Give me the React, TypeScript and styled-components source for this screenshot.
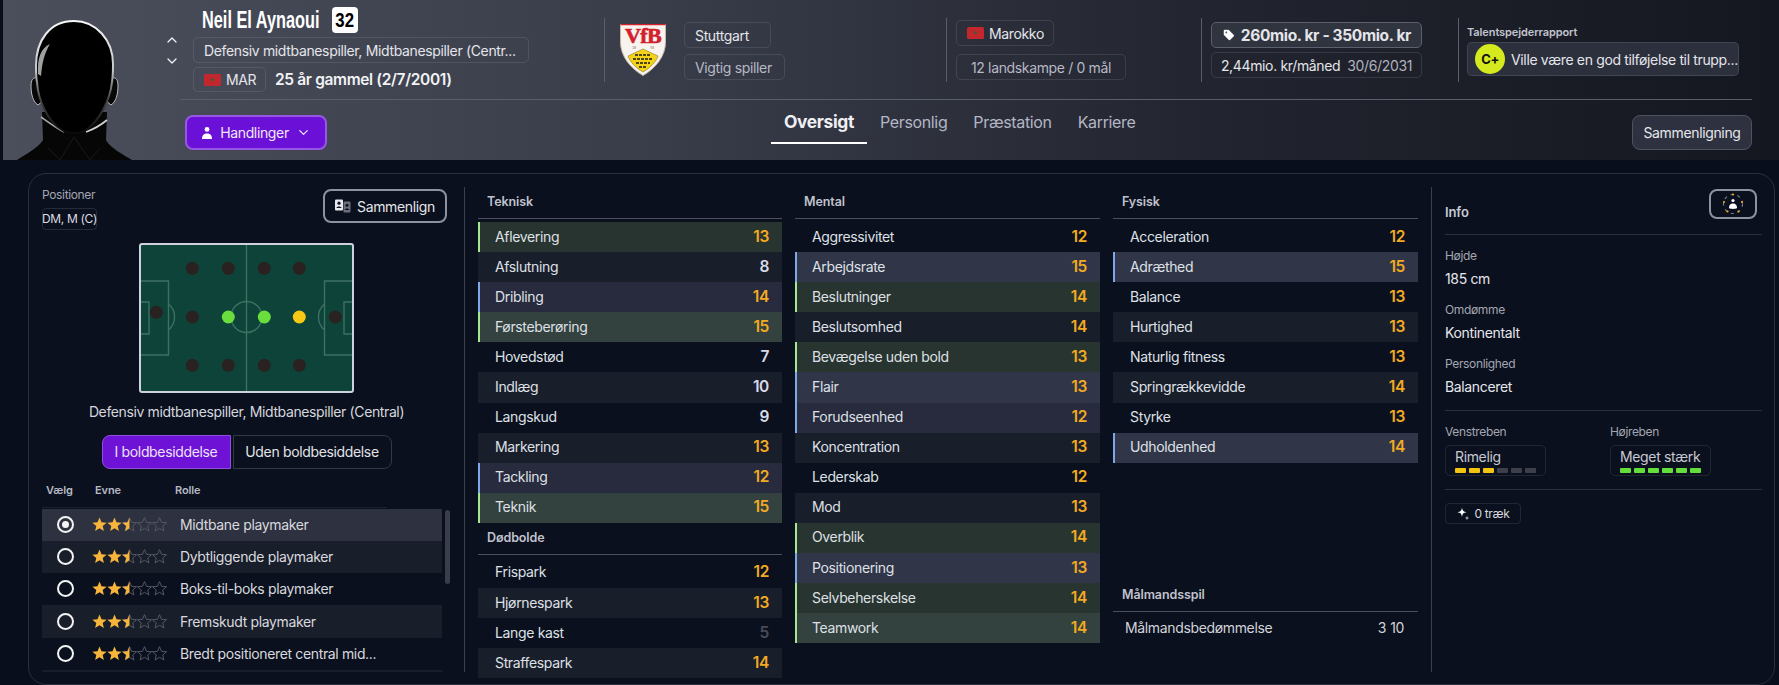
import React from "react";
import styled, { createGlobalStyle } from "styled-components";
import { ChevronUp, ChevronDown, Tag } from "lucide-react";

const Global = createGlobalStyle`
  html, body { margin: 0; padding: 0; background: #080e1b; }
  body { font-family: Inter, "Noto Sans", "Liberation Sans", sans-serif; font-size: 14px; letter-spacing: -0.35px; color: #e2e3e8; }
  * { box-sizing: border-box; }
`;

const Page = styled.div`
  width: 1779px;
  height: 685px;
  overflow: hidden;
  background: #080e1b;
`;

const Header = styled.header`
  margin-left: 3px;
  height: 160px;
  display: flex;
  background: linear-gradient(90deg, #4b4f5c 0%, #3a3e4b 35%, #22252f 68%, #14171f 100%);
`;

const Portrait = styled.div`
  width: 157px;
  height: 160px;
  flex: none;
  svg { display: block; }
`;

const Arrows = styled.div`
  width: 20px;
  flex: none;
  padding-top: 32px;
  display: flex;
  flex-direction: column;
  align-items: center;
  gap: 5px;
  color: #eceef2;
  margin-left: 2px;
  margin-right: -2px;
`;

const HeaderMain = styled.div`
  width: 1572px;
  flex: none;
`;

const TopRow = styled.div`
  height: 100px;
  border-bottom: 1px solid #5a5e6b;
  display: grid;
  grid-template-columns: 424px 342px 255px 257px 1fr;
`;

const Identity = styled.div`
  padding: 7px 0 0 13px;
  display: flex;
  flex-direction: column;
  gap: 4px;
`;

const NameRow = styled.div`
  height: 26px;
  padding-left: 9px;
  display: flex;
  align-items: center;
  gap: 10px;
`;

const Name = styled.span`
  font-family: "Liberation Sans", sans-serif;
  font-weight: 700;
  font-size: 24px;
  letter-spacing: 0;
  color: #fff;
  display: inline-block;
  width: 120px;
  white-space: nowrap;
  transform: scaleX(0.68);
  transform-origin: left center;
`;

const Shirt = styled.span`
  width: 26px;
  height: 26px;
  border-radius: 4px;
  background: #fff;
  display: flex;
  align-items: center;
  justify-content: center;
`;

const ShirtNumber = styled.span`
  color: #000;
  font-family: "Liberation Sans", sans-serif;
  font-weight: 700;
  font-size: 21px;
  letter-spacing: 0;
  transform: scaleX(0.8);
`;

const Chip = styled.span<{ $w?: number; $h?: number; $muted?: boolean; $strong?: boolean; $center?: boolean }>`
  display: inline-flex;
  align-items: center;
  justify-content: ${(p) => (p.$center ? "center" : "flex-start")};
  gap: 5px;
  width: ${(p) => (p.$w ? `${p.$w}px` : "auto")};
  height: ${(p) => p.$h ?? 26}px;
  padding: 0 10px;
  border: 1px solid ${(p) => (p.$strong ? "#5c606c" : "rgba(160,165,185,0.18)")};
  background: ${(p) => (p.$strong ? "#30343f" : "transparent")};
  border-radius: 5px;
  color: ${(p) => (p.$muted ? "#b7b9c5" : "#e4e5ea")};
  font-size: ${(p) => (p.$strong ? "15.5px" : "14px")};
  font-weight: ${(p) => (p.$strong ? 700 : 400)};
  white-space: nowrap;
  flex: none;
`;

const AgeRow = styled.div`
  display: flex;
  align-items: center;
  gap: 9px;
`;

const Age = styled.span`
  font-size: 15.5px;
  font-weight: 600;
  color: #f2f2f5;
`;

const FlagBox = styled.svg`
  flex: none;
  display: block;
`;

const Group = styled.div<{ $gap?: number; $row?: boolean; $top?: number }>`
  margin-top: 18px;
  height: 64px;
  border-left: 1px solid #5a5e6b;
  padding: ${(p) => p.$top ?? 4}px 0 0 9px;
  display: flex;
  flex-direction: ${(p) => (p.$row ? "row" : "column")};
  align-items: flex-start;
  gap: ${(p) => p.$gap ?? 6}px;
`;

const ClubStack = styled.div`
  display: flex;
  flex-direction: column;
  align-items: flex-start;
  gap: 6px;
`;

const Crest = styled.svg`
  display: block;
  flex: none;
  margin: 2px 12px 0 6px;
`;

const Faint = styled.span`
  color: #b0b2be;
  margin-left: 2px;
`;

const ReportLabel = styled.div`
  font-size: 11px;
  font-weight: 600;
  line-height: 14px;
  letter-spacing: -0.1px;
  color: #c2c4cf;
  margin-left: -1px;
`;

const ReportChip = styled.div`
  width: 272px;
  height: 34px;
  margin-left: -1px;
  border-radius: 5px;
  border: 1px solid rgba(160, 165, 185, 0.18);
  background: #2c303d;
  display: flex;
  align-items: center;
  padding-left: 7px;
  gap: 6px;
  white-space: nowrap;
  color: #e4e5ea;
`;

const Grade = styled.span`
  width: 30px;
  height: 30px;
  border-radius: 50%;
  background: #d4ea1e;
  color: #111;
  font-size: 13px;
  font-weight: 700;
  display: flex;
  align-items: center;
  justify-content: center;
  flex: none;
`;

const BottomRow = styled.div`
  height: 60px;
  display: flex;
  align-items: flex-start;
`;

const ActionButton = styled.button`
  margin: 15px 0 0 5px;
  width: 142px;
  height: 35px;
  border-radius: 8px;
  border: 2px solid #9658e4;
  background: #6b10d6;
  color: #f0e8fb;
  font: inherit;
  font-size: 14px;
  letter-spacing: inherit;
  display: flex;
  align-items: center;
  justify-content: center;
  gap: 7px;
`;

const Tabs = styled.nav`
  margin-left: 444px;
  display: flex;
`;

const TabItem = styled.div<{ $active?: boolean }>`
  height: 44px;
  padding: 1px 13px 0;
  display: flex;
  align-items: center;
  font-size: ${(p) => (p.$active ? "17.4px" : "16px")};
  font-weight: ${(p) => (p.$active ? 700 : 400)};
  color: ${(p) => (p.$active ? "#f0f0f4" : "#b4b6c6")};
  border-bottom: 2px solid ${(p) => (p.$active ? "#fff" : "transparent")};
`;

const CompareButton = styled.button`
  margin: 15px 0 0 auto;
  width: 120px;
  height: 35px;
  border-radius: 8px;
  border: 1px solid #50535f;
  background: #2e3240;
  color: #e6e7ec;
  font: inherit;
  font-size: 14px;
  letter-spacing: inherit;
`;

const Panel = styled.main`
  margin: 13px 4px 0 28px;
  height: 512px;
  border: 1px solid #2c303d;
  border-radius: 18px;
  background: #0a101d;
  padding: 13px 13px 11px 0;
  display: flex;
`;

const LeftCol = styled.section`
  width: 436px;
  height: 485px;
  flex: none;
  border-right: 1px solid #3c404c;
  padding: 0 13px;
  display: flex;
  flex-direction: column;
  overflow: hidden;
`;

const LeftTop = styled.div`
  height: 56px;
  display: flex;
  justify-content: space-between;
  align-items: flex-start;
`;

const PosBlock = styled.div`
  display: flex;
  flex-direction: column;
  align-items: flex-start;
`;

const SmallLabel = styled.div`
  font-size: 12px;
  line-height: 16px;
  color: #a4a6b2;
`;

const PosChip = styled.span`
  margin-top: 5px;
  height: 22px;
  width: 55px;
  padding-bottom: 2px;
  border: 1px solid rgba(160, 165, 185, 0.18);
  border-radius: 4px;
  font-size: 12px;
  display: flex;
  align-items: center;
  justify-content: center;
  color: #dcdde2;
  white-space: nowrap;
`;

const OutlineButton = styled.button`
  margin: 2px 4px 0 0;
  width: 124px;
  height: 34px;
  border: 2px solid #8f91a0;
  border-radius: 8px;
  background: transparent;
  color: #e4e5ea;
  font: inherit;
  font-size: 14px;
  letter-spacing: inherit;
  display: flex;
  align-items: center;
  justify-content: center;
  gap: 6px;
`;

const PitchWrap = styled.div`
  display: flex;
  justify-content: center;
  svg { display: block; }
`;

const Caption = styled.div`
  margin-top: 10px;
  line-height: 18px;
  text-align: center;
  color: #d6d7dd;
  white-space: nowrap;
  letter-spacing: -0.38px;
`;

const Toggle = styled.div`
  margin-top: 14px;
  display: flex;
  justify-content: center;
  gap: 2px;
`;

const ToggleButton = styled.button<{ $on?: boolean }>`
  height: 34px;
  width: ${(p) => (p.$on ? 129 : 159)}px;
  border: 1px solid ${(p) => (p.$on ? "#8f4fe0" : "#343845")};
  background: ${(p) => (p.$on ? "#6e12d6" : "transparent")};
  color: ${(p) => (p.$on ? "#ece2fa" : "#e2e3e8")};
  border-radius: ${(p) => (p.$on ? "8px 0 0 8px" : "0 8px 8px 0")};
  font: inherit;
  font-size: 14px;
  letter-spacing: inherit;
`;

const RoleHead = styled.div`
  width: 345px;
  height: 39px;
  margin-bottom: 1px;
  padding: 13px 0 0 4px;
  border-bottom: 1px solid #1c212d;
  display: grid;
  grid-template-columns: 49px 80px 1fr;
  font-size: 11px;
  font-weight: 600;
  line-height: 16px;
  letter-spacing: -0.1px;
  color: #b6b8c4;
`;

const RoleList = styled.div`
  position: relative;
  height: 164px;
  overflow: hidden;
`;

const RoleRow = styled.div<{ $bg: string }>`
  width: 400px;
  height: 32.25px;
  padding-bottom: 1px;
  background: ${(p) => p.$bg};
  display: grid;
  grid-template-columns: 50px 88px 1fr;
  align-items: center;
  color: #d8d9de;
  white-space: nowrap;
`;

const Radio = styled.span<{ $on?: boolean }>`
  margin-left: 15px;
  width: 17px;
  height: 17px;
  border-radius: 50%;
  border: 2px solid #f4f4f6;
  display: flex;
  align-items: center;
  justify-content: center;
  &::after {
    content: "";
    display: ${(p) => (p.$on ? "block" : "none")};
    width: 7px;
    height: 7px;
    border-radius: 50%;
    background: #f4f4f6;
  }
`;

const StarRow = styled.span`
  display: flex;
  svg { display: block; }
`;

const ScrollThumb = styled.div`
  position: absolute;
  left: 403px;
  top: 1px;
  width: 5px;
  height: 74px;
  border-radius: 3px;
  background: #3a3e4a;
`;

const AttrArea = styled.section`
  flex: none;
  padding-left: 13px;
  width: 953px;
  height: 485px;
  display: grid;
  grid-template-columns: 304px 305px 305px;
  column-gap: 13px;
  align-items: start;
`;

const AttrCol = styled.div``;

const AttrTitle = styled.div`
  height: 32px;
  border-bottom: 1px solid #4b4e5c;
  margin-bottom: 3px;
  padding: 6px 0 0 9px;
  font-size: 12.5px;
  line-height: 18px;
  font-weight: 600;
  letter-spacing: -0.1px;
  color: #c0c2ce;
`;

const AttrRow = styled.div<{ $bg: string; $bar: string }>`
  height: 30.1px;
  padding: 0 13px 2px 15px;
  background: ${(p) => p.$bg};
  border-left: 2px solid ${(p) => p.$bar};
  display: flex;
  align-items: center;
  justify-content: space-between;
  color: #dfe0e6;
`;

const AttrValue = styled.span<{ $c: string }>`
  font-size: 15.5px;
  font-weight: 600;
  color: ${(p) => p.$c};
`;

const Keeper = styled.div`
  margin-top: 117px;
`;

const KeeperRow = styled.div`
  height: 25px;
  padding: 0 14px 0 12px;
  display: flex;
  align-items: center;
  justify-content: space-between;
  color: #d2d3da;
`;

const KeeperVals = styled.span`
  display: flex;
  gap: 4px;
`;

const InfoCol = styled.aside`
  flex: none;
  width: 331px;
  height: 485px;
  margin-left: 13px;
  border-left: 1px solid #3c404c;
  padding-left: 13px;
`;

const InfoHead = styled.div`
  height: 48px;
  border-bottom: 1px solid #2c303c;
  display: flex;
  justify-content: space-between;
  align-items: flex-start;
  padding-right: 5px;
`;

const InfoTitle = styled.div`
  margin-top: 16px;
  line-height: 18px;
  font-size: 13px;
  font-weight: 600;
  letter-spacing: -0.1px;
  color: #c8cad4;
`;

const IconButton = styled.button`
  margin-top: 2px;
  width: 48px;
  height: 30px;
  border: 2px solid #8f91a0;
  border-radius: 8px;
  background: transparent;
  display: flex;
  align-items: center;
  justify-content: center;
  padding: 0;
`;

const Fields = styled.div`
  padding: 13px 0;
  border-bottom: 1px solid #2c303c;
  display: flex;
  flex-direction: column;
  gap: 13px;
`;

const Field = styled.div`
  display: flex;
  flex-direction: column;
  gap: 5px;
`;

const FieldValue = styled.div`
  line-height: 20px;
  color: #e6e7ec;
`;

const Feet = styled.div`
  padding: 13px 0;
  border-bottom: 1px solid #2c303c;
  display: grid;
  grid-template-columns: 165px 1fr;
`;

const FootChip = styled.div`
  width: 101px;
  height: 31px;
  border: 1px solid rgba(160, 165, 185, 0.15);
  border-radius: 5px;
  padding: 2px 0 0 9px;
  line-height: 18px;
  color: #c8c9d2;
`;

const Bars = styled.div`
  display: flex;
  gap: 3px;
  margin-top: 2px;
`;

const Bar = styled.span<{ $c: string }>`
  width: 11px;
  height: 5px;
  border-radius: 1px;
  background: ${(p) => p.$c};
`;

const TraitChip = styled.span`
  margin-top: 13px;
  width: 76px;
  height: 21px;
  border: 1px solid rgba(160, 165, 185, 0.15);
  border-radius: 4px;
  font-size: 12px;
  display: flex;
  align-items: center;
  justify-content: center;
  gap: 6px;
  color: #d8d9de;
`;

type Tone = "n" | "g" | "b";
type Attr = [string, number, Tone];

const teknisk: Attr[] = [
  ["Aflevering", 13, "g"], ["Afslutning", 8, "n"], ["Dribling", 14, "b"], ["Førsteberøring", 15, "g"],
  ["Hovedstød", 7, "n"], ["Indlæg", 10, "n"], ["Langskud", 9, "n"], ["Markering", 13, "n"],
  ["Tackling", 12, "b"], ["Teknik", 15, "g"],
];
const doedbolde: Attr[] = [
  ["Frispark", 12, "n"], ["Hjørnespark", 13, "n"], ["Lange kast", 5, "n"], ["Straffespark", 14, "n"],
];
const mental: Attr[] = [
  ["Aggressivitet", 12, "n"], ["Arbejdsrate", 15, "b"], ["Beslutninger", 14, "g"], ["Beslutsomhed", 14, "n"],
  ["Bevægelse uden bold", 13, "g"], ["Flair", 13, "b"], ["Forudseenhed", 12, "b"], ["Koncentration", 13, "n"],
  ["Lederskab", 12, "n"], ["Mod", 13, "n"], ["Overblik", 14, "g"], ["Positionering", 13, "b"],
  ["Selvbeherskelse", 14, "g"], ["Teamwork", 14, "g"],
];
const fysisk: Attr[] = [
  ["Acceleration", 12, "n"], ["Adræthed", 15, "b"], ["Balance", 13, "n"], ["Hurtighed", 13, "n"],
  ["Naturlig fitness", 13, "n"], ["Springrækkevidde", 14, "n"], ["Styrke", 13, "n"], ["Udholdenhed", 14, "b"],
];

const rowBg = (tone: Tone, i: number) => {
  const odd = i % 2 === 1;
  if (tone === "g") return odd ? "#33423f" : "#28342f";
  if (tone === "b") return odd ? "#303648" : "#272b3d";
  return odd ? "#191e2b" : "transparent";
};
const barColor = (tone: Tone) => (tone === "g" ? "#a6e88f" : tone === "b" ? "#7fa8e8" : "transparent");
const valueColor = (v: number) => (v < 6 ? "#4a4d58" : v <= 10 ? "#d8dae8" : "#f2aa22");

const AttrList = ({ items }: { items: Attr[] }) => (
  <>
    {items.map(([label, value, tone], i) => (
      <AttrRow key={label} $bg={rowBg(tone, i)} $bar={barColor(tone)}>
        <span>{label}</span>
        <AttrValue $c={valueColor(value)}>{value}</AttrValue>
      </AttrRow>
    ))}
  </>
);

const STAR = "M7.5 0.6 L9.5 5.3 L14.6 5.7 L10.7 9 L11.9 14 L7.5 11.3 L3.1 14 L4.3 9 L0.4 5.7 L5.5 5.3 Z";

const Stars = ({ id }: { id: string }) => (
  <StarRow>
    {[0, 1, 2, 3, 4].map((i) => (
      <svg key={i} width="15" height="15" viewBox="0 0 15 15">
        {i < 2 && <path d={STAR} fill="#f8b53c" />}
        {i === 2 && (
          <>
            <defs>
              <clipPath id={`${id}-half`}>
                <rect x="0" y="0" width="7.5" height="15" />
              </clipPath>
            </defs>
            <path d={STAR} fill="none" stroke="#555864" strokeWidth="1" />
            <path d={STAR} fill="#f8b53c" clipPath={`url(#${id}-half)`} />
          </>
        )}
        {i > 2 && <path d={STAR} fill="none" stroke="#555864" strokeWidth="1" />}
      </svg>
    ))}
  </StarRow>
);

const Flag = () => (
  <FlagBox width="17" height="12" viewBox="0 0 17 12">
    <rect width="17" height="12" rx="1.5" fill="#c1272d" />
    <path d="M8.5 4 L9.2 6.9 L7 5.2 L10 5.2 L7.8 6.9 Z" fill="none" stroke="#1d6b3a" strokeWidth="0.6" />
  </FlagBox>
);

const Silhouette = () => (
  <svg width="157" height="160" viewBox="3 0 157 160">
    <defs>
      <linearGradient id="rim" x1="0" y1="0" x2="0" y2="1">
        <stop offset="0" stopColor="#f8f8f8" />
        <stop offset="0.45" stopColor="#c4c4c4" />
        <stop offset="0.68" stopColor="#4a4a4a" />
        <stop offset="1" stopColor="#0a0a0a" />
      </linearGradient>
    </defs>
    <path d="M37 78 C33 77 31 80 31 86 C31 94 33 102 38 105 L44 100 Z" fill="#080808" stroke="#bcbcbc" strokeWidth="1" />
    <path d="M112 78 C116 77 118 80 118 86 C118 94 116 102 111 105 L105 100 Z" fill="#080808" stroke="#bcbcbc" strokeWidth="1" />
    <path d="M42 112 L43 140 C38 148 26 154 17 160 L132 160 C124 155 110 148 106 140 L107 112 Z" fill="#060606" />
    <path d="M41 117 C48 122 56 128 64 132" fill="none" stroke="#a8a8a8" strokeWidth="1.6" />
    <path d="M107 120 C101 125 94 129 86 132" fill="none" stroke="#d0d0d0" strokeWidth="1.8" />
    <path d="M74 21 C50 21 36 40 36 66 C36 72 36 78 37 82 C38 100 48 122 62 130 C68 134 80 134 86 130 C100 120 110 100 112 82 C113 76 113 70 113 64 C113 40 96 21 74 21 Z"
      fill="#000" stroke="url(#rim)" strokeWidth="2" />
    <path d="M38 74 C37 58 41 48 50 44 C45 52 42 62 41 76 Z" fill="#a0a0a0" />
    <path d="M74 137 L60 160 M74 137 L90 160 M48 148 L60 160 M100 148 L90 160" stroke="#1a1a1a" strokeWidth="1" fill="none" />
  </svg>
);

const ClubCrest = () => (
  <Crest width="46" height="52" viewBox="0 0 46 52">
    <path d="M0.5 0.5 H45.5 V18 C45.5 32 36 44 23 51.5 C10 44 0.5 32 0.5 18 Z" fill="#f7f3ee" stroke="#c9b7a6" />
    <path d="M0.5 0.5 H45.5" stroke="#d3202c" strokeWidth="1.4" />
    <text x="23" y="19" textAnchor="middle" fontFamily="'Liberation Serif', serif" fontWeight="700" fontSize="22" letterSpacing="-0.6" stroke="#d3202c" strokeWidth="0.6" fill="#d3202c">VfB</text>
    <text x="14" y="25" textAnchor="middle" fontFamily="'Liberation Sans', sans-serif" fontSize="3.6" fill="#8a6a5a">18</text>
    <text x="32" y="25" textAnchor="middle" fontFamily="'Liberation Sans', sans-serif" fontSize="3.6" fill="#8a6a5a">93</text>
    <path d="M8 32 L23 25 L38 32 C36 38 30 44 23 48 C16 44 10 38 8 32 Z" fill="#f4d21a" stroke="#8d7a2a" strokeWidth="0.6" />
    <path d="M15 31 H31 M13 35 H33 M16 39 H30 M19 43 H27" stroke="#1a1a1a" strokeWidth="1.3" strokeDasharray="3 1" />
  </Crest>
);

const PersonIcon = () => (
  <svg width="12" height="14" viewBox="0 0 12 14">
    <circle cx="6" cy="3.4" r="2.4" fill="#fff" />
    <path d="M1 13 C1 9 3 7.4 6 7.4 C9 7.4 11 9 11 13 Z" fill="#fff" />
  </svg>
);

const CompareIcon = () => (
  <svg width="16" height="14" viewBox="0 0 16 14">
    <rect x="0" y="0.5" width="8" height="11" rx="1" fill="#e8e8ee" />
    <circle cx="4" cy="4.2" r="1.6" fill="#0a101d" />
    <path d="M1.5 9 C1.5 7 6.5 7 6.5 9 Z" fill="#0a101d" />
    <rect x="8.5" y="2.5" width="7" height="11" rx="1" fill="#6b6e7b" />
    <circle cx="12" cy="6.2" r="1.5" fill="#0a101d" />
    <path d="M9.8 11 C9.8 9 14.2 9 14.2 11 Z" fill="#0a101d" />
  </svg>
);

const OrbitIcon = () => (
  <svg width="24" height="24" viewBox="0 0 24 24">
    <circle cx="12" cy="12" r="9.5" fill="none" stroke="#7d7f8c" strokeWidth="1.1" strokeDasharray="3 4" />
    <circle cx="12" cy="2.5" r="1.1" fill="#f2aa22" />
    <circle cx="3" cy="10" r="1.1" fill="#f2aa22" />
    <circle cx="21" cy="10" r="1.1" fill="#f2aa22" />
    <circle cx="6.5" cy="19.5" r="1.1" fill="#f2aa22" />
    <circle cx="17.5" cy="19.5" r="1.1" fill="#f2aa22" />
    <circle cx="12" cy="8.5" r="1.6" fill="#fff" />
    <path d="M8 16 C8 12.5 10 11.4 12 11.4 C14 11.4 16 12.5 16 16 C14.5 17.2 9.5 17.2 8 16 Z" fill="#fff" />
  </svg>
);

const SparkIcon = () => (
  <svg width="12" height="13" viewBox="0 0 12 13">
    <path d="M5 0.5 C5.4 3.6 6.4 4.8 9.6 5.2 C6.4 5.6 5.4 6.8 5 10 C4.6 6.8 3.6 5.6 0.4 5.2 C3.6 4.8 4.6 3.6 5 0.5 Z" fill="#fff" />
    <path d="M10 9.5 V12.5 M8.5 11 H11.5" stroke="#cfd0d6" strokeWidth="0.9" />
  </svg>
);

const dots: [number, number, string][] = [
  [192.3, 268.3, "#2a2220"], [228.3, 268.3, "#2a2220"], [264.3, 268.3, "#2a2220"], [299.3, 268.3, "#2a2220"],
  [156.3, 312.3, "#2a2220"], [192.3, 317, "#2a2220"], [228.3, 317, "#6ade3c"], [264.3, 317, "#6ade3c"],
  [299.3, 317, "#f7c914"], [335.3, 317, "#2a2220"],
  [192.3, 365.3, "#2a2220"], [228.3, 365.3, "#2a2220"], [264.3, 365.3, "#2a2220"], [299.3, 365.3, "#2a2220"],
];

const Pitch = () => (
  <svg width="215" height="150" viewBox="139 243 215 150">
    <rect x="140" y="244" width="213" height="148" rx="2" fill="#0d4338" />
    <g fill="none" stroke="#3f7064" strokeWidth="1.4">
      <path d="M246.5 244 V392" />
      <circle cx="246.5" cy="317" r="15.5" />
      <path d="M140 281 H168.5 V355 H140" />
      <path d="M140 302 H149 V334 H140" />
      <path d="M168.5 304 A17 17 0 0 1 168.5 330" />
      <path d="M353 281 H324.5 V355 H353" />
      <path d="M353 302 H344 V334 H353" />
      <path d="M324.5 304 A17 17 0 0 0 324.5 330" />
    </g>
    <rect x="140" y="244" width="213" height="148" rx="2" fill="none" stroke="#cdd2dc" strokeWidth="2" />
    {dots.map(([x, y, c]) => (
      <circle key={`${x}-${y}`} cx={x} cy={y} r="6.5" fill={c} />
    ))}
  </svg>
);

const roles = [
  "Midtbane playmaker", "Dybtliggende playmaker", "Boks-til-boks playmaker",
  "Fremskudt playmaker", "Bredt positioneret central mid...", "",
];
const roleBg = ["#2d3140", "#191e2b", "transparent", "#191e2b", "transparent", "#191e2b"];

export default function App() {
  return (
    <Page>
      <Global />
      <Header>
        <Portrait><Silhouette /></Portrait>
        <Arrows>
          <ChevronUp size={16} strokeWidth={2} />
          <ChevronDown size={16} strokeWidth={2} />
        </Arrows>
        <HeaderMain>
          <TopRow>
            <Identity>
              <NameRow>
                <Name>Neil El Aynaoui</Name>
                <Shirt><ShirtNumber>32</ShirtNumber></Shirt>
              </NameRow>
              <Chip $w={336}>Defensiv midtbanespiller, Midtbanespiller (Centr...</Chip>
              <AgeRow>
                <Chip $w={73} $h={25}><Flag />MAR</Chip>
                <Age>25 år gammel (2/7/2001)</Age>
              </AgeRow>
            </Identity>
            <Group $row>
              <ClubCrest />
              <ClubStack>
                <Chip $w={87}>Stuttgart</Chip>
                <Chip $w={101} $muted>Vigtig spiller</Chip>
              </ClubStack>
            </Group>
            <Group $top={2} $gap={8}>
              <Chip $w={98}><Flag />Marokko</Chip>
              <Chip $w={170} $muted $center>12 landskampe / 0 mål</Chip>
            </Group>
            <Group $gap={4}>
              <Chip $w={211} $strong $center><Tag size={16} fill="#fff" color="#30343f" />260mio. kr - 350mio. kr</Chip>
              <Chip $w={211} $center>2,44mio. kr/måned <Faint>30/6/2031</Faint></Chip>
            </Group>
            <Group $top={7} $gap={3}>
              <ReportLabel>Talentspejderrapport</ReportLabel>
              <ReportChip>
                <Grade>C+</Grade>
                Ville være en god tilføjelse til trupp...
              </ReportChip>
            </Group>
          </TopRow>
          <BottomRow>
            <ActionButton><PersonIcon />Handlinger<ChevronDown size={15} /></ActionButton>
            <Tabs>
              <TabItem $active>Oversigt</TabItem>
              <TabItem>Personlig</TabItem>
              <TabItem>Præstation</TabItem>
              <TabItem>Karriere</TabItem>
            </Tabs>
            <CompareButton>Sammenligning</CompareButton>
          </BottomRow>
        </HeaderMain>
      </Header>
      <Panel>
        <LeftCol>
          <LeftTop>
            <PosBlock>
              <SmallLabel>Positioner</SmallLabel>
              <PosChip>DM, M (C)</PosChip>
            </PosBlock>
            <OutlineButton><CompareIcon />Sammenlign</OutlineButton>
          </LeftTop>
          <PitchWrap><Pitch /></PitchWrap>
          <Caption>Defensiv midtbanespiller, Midtbanespiller (Central)</Caption>
          <Toggle>
            <ToggleButton $on>I boldbesiddelse</ToggleButton>
            <ToggleButton>Uden boldbesiddelse</ToggleButton>
          </Toggle>
          <RoleHead><span>Vælg</span><span>Evne</span><span>Rolle</span></RoleHead>
          <RoleList>
            {roles.map((r, i) => (
              <RoleRow key={i} $bg={roleBg[i]}>
                <Radio $on={i === 0} />
                <Stars id={`r${i}`} />
                <span>{r}</span>
              </RoleRow>
            ))}
            <ScrollThumb />
          </RoleList>
        </LeftCol>
        <AttrArea>
          <AttrCol>
            <AttrTitle>Teknisk</AttrTitle>
            <AttrList items={teknisk} />
            <AttrTitle>Dødbolde</AttrTitle>
            <AttrList items={doedbolde} />
          </AttrCol>
          <AttrCol>
            <AttrTitle>Mental</AttrTitle>
            <AttrList items={mental} />
          </AttrCol>
          <AttrCol>
            <AttrTitle>Fysisk</AttrTitle>
            <AttrList items={fysisk} />
            <Keeper>
              <AttrTitle>Målmandsspil</AttrTitle>
              <KeeperRow>
                <span>Målmandsbedømmelse</span>
                <KeeperVals><span>3</span><span>10</span></KeeperVals>
              </KeeperRow>
            </Keeper>
          </AttrCol>
        </AttrArea>
        <InfoCol>
          <InfoHead>
            <InfoTitle>Info</InfoTitle>
            <IconButton><OrbitIcon /></IconButton>
          </InfoHead>
          <Fields>
            <Field><SmallLabel>Højde</SmallLabel><FieldValue>185 cm</FieldValue></Field>
            <Field><SmallLabel>Omdømme</SmallLabel><FieldValue>Kontinentalt</FieldValue></Field>
            <Field><SmallLabel>Personlighed</SmallLabel><FieldValue>Balanceret</FieldValue></Field>
          </Fields>
          <Feet>
            <Field>
              <SmallLabel>Venstreben</SmallLabel>
              <FootChip>
                Rimelig
                <Bars>
                  {[0, 1, 2, 3, 4, 5].map((i) => <Bar key={i} $c={i < 3 ? "#f2c40f" : "#3d404b"} />)}
                </Bars>
              </FootChip>
            </Field>
            <Field>
              <SmallLabel>Højreben</SmallLabel>
              <FootChip>
                Meget stærk
                <Bars>
                  {[0, 1, 2, 3, 4, 5].map((i) => <Bar key={i} $c="#63de3a" />)}
                </Bars>
              </FootChip>
            </Field>
          </Feet>
          <TraitChip><SparkIcon />0 træk</TraitChip>
        </InfoCol>
      </Panel>
    </Page>
  );
}
